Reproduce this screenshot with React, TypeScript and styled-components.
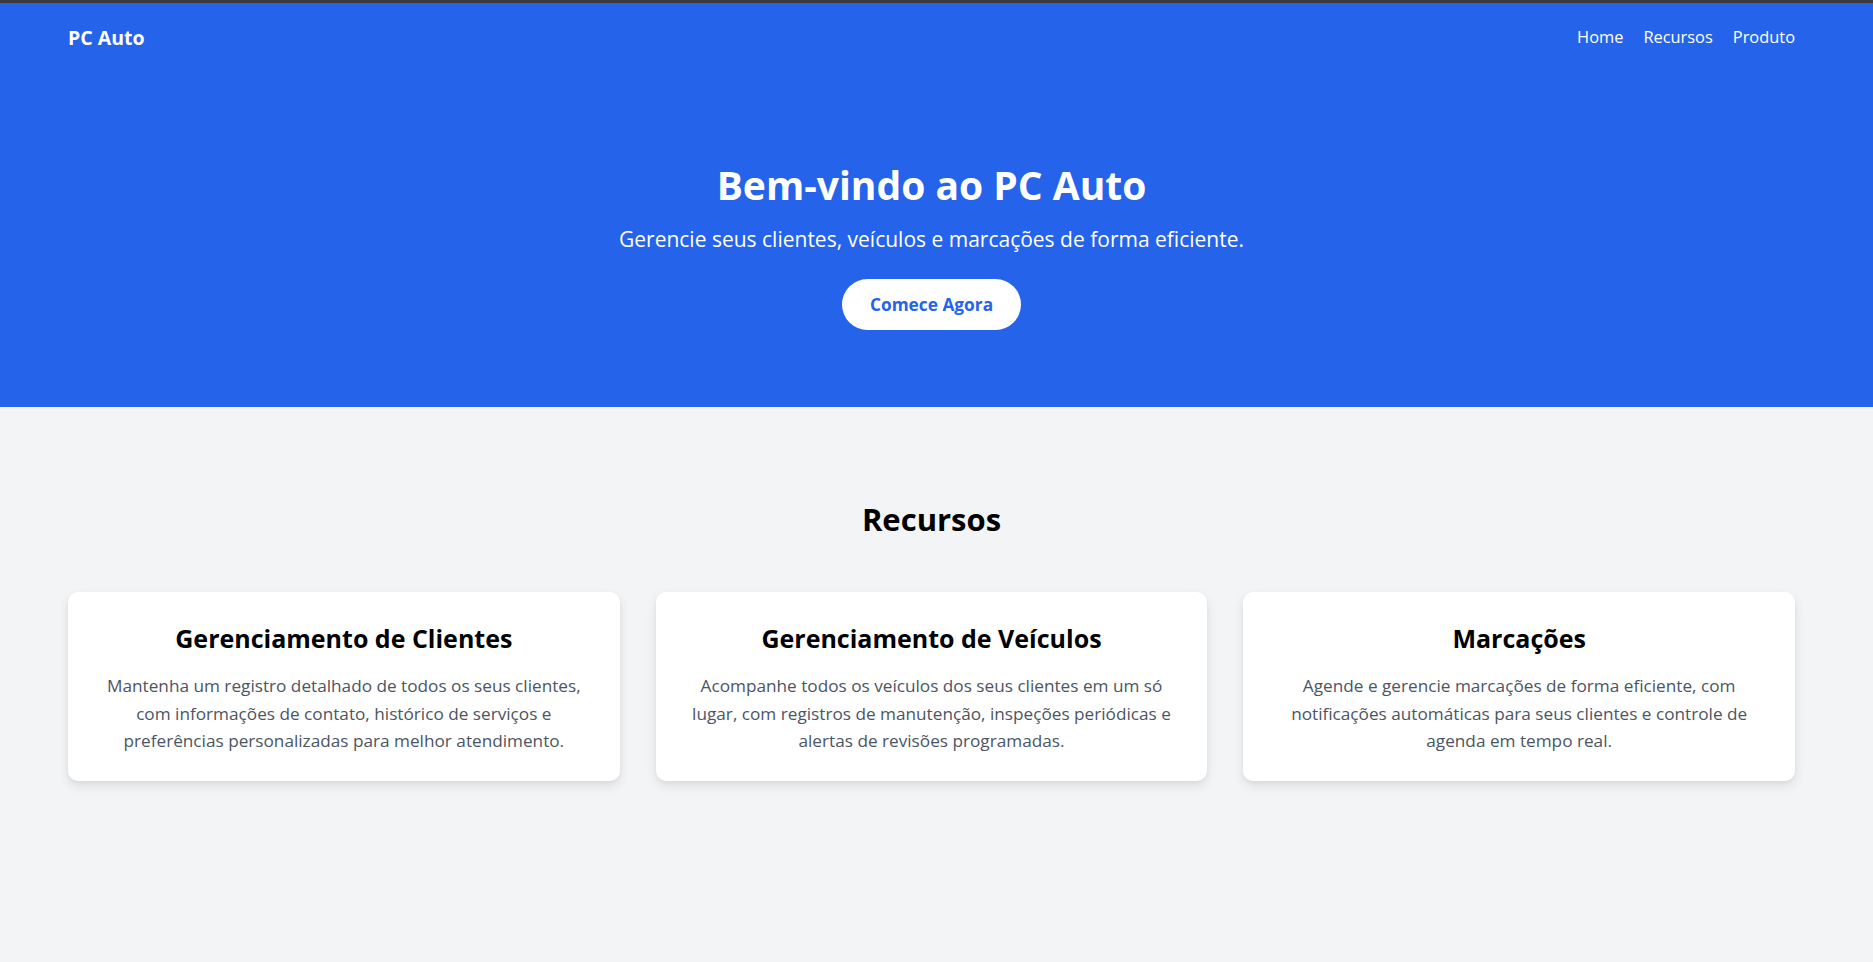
import React from "react";
import styled, { createGlobalStyle } from "styled-components";

const GlobalStyle = createGlobalStyle`
  *, *::before, *::after { box-sizing: border-box; }
  html, body { margin: 0; padding: 0; }
  body {
    background: #f3f4f6;
    font-family: "Open Sans", "Noto Sans", sans-serif;
    color: #000;
    -webkit-font-smoothing: antialiased;
  }
`;

const Page = styled.div`
  min-height: 962px;
  display: flex;
  flex-direction: column;
  border-top: 3px solid #3b3b3d;
`;

const Blue = styled.div`
  background: #2563eb;
  color: #fff;
`;

const Header = styled.header`
  display: flex;
  align-items: center;
  justify-content: space-between;
  padding: 20px 78px 20px 68px;
  height: 68px;
`;

const Logo = styled.div`
  font-size: 19.5px;
  font-weight: 700;
  line-height: 28px;
  margin-top: 2px;
`;

const Nav = styled.nav`
  display: flex;
  gap: 20px;
`;

const NavLink = styled.a`
  color: #fff;
  text-decoration: none;
  font-size: 16.4px;
  line-height: 28px;
`;

const Hero = styled.section`
  display: flex;
  flex-direction: column;
  align-items: center;
  padding: 92px 78px 77px 68px;
  text-align: center;
`;

const HeroTitle = styled.h1`
  margin: 0;
  font-size: 39px;
  font-weight: 700;
  line-height: 43px;
`;

const HeroText = styled.p`
  margin: 19px 0 0;
  font-size: 21px;
  line-height: 28px;
`;

const Cta = styled.button`
  margin-top: 26px;
  height: 51px;
  padding: 0 28px;
  border: none;
  border-radius: 999px;
  background: #fff;
  color: #2563eb;
  font-family: inherit;
  font-size: 17.3px;
  font-weight: 700;
  cursor: pointer;
`;

const Features = styled.section`
  padding: 92px 78px 80px 68px;
  display: flex;
  flex-direction: column;
  align-items: center;
`;

const SectionTitle = styled.h2`
  margin: 0;
  font-size: 31px;
  font-weight: 700;
  line-height: 40px;
`;

const Grid = styled.div`
  margin-top: 53px;
  width: 100%;
  display: grid;
  grid-template-columns: repeat(3, 1fr);
  gap: 36px;
`;

const Card = styled.article`
  background: #fff;
  border-radius: 10px;
  box-shadow: 0 5px 12px rgba(0, 0, 0, 0.09), 0 2px 4px rgba(0, 0, 0, 0.04);
  padding: 30px 29px 26px;
  text-align: center;
`;

const CardTitle = styled.h3`
  margin: 0;
  font-size: 25px;
  font-weight: 700;
  line-height: 32px;
`;

const CardText = styled.p`
  margin: 18px 0 0;
  font-size: 17.2px;
  line-height: 27.5px;
  color: #4b5563;
`;

const features = [
  {
    title: "Gerenciamento de Clientes",
    text: "Mantenha um registro detalhado de todos os seus clientes, com informações de contato, histórico de serviços e preferências personalizadas para melhor atendimento.",
  },
  {
    title: "Gerenciamento de Veículos",
    text: "Acompanhe todos os veículos dos seus clientes em um só lugar, com registros de manutenção, inspeções periódicas e alertas de revisões programadas.",
  },
  {
    title: "Marcações",
    text: "Agende e gerencie marcações de forma eficiente, com notificações automáticas para seus clientes e controle de agenda em tempo real.",
  },
];

export default function App() {
  return (
    <>
      <GlobalStyle />
      <Page>
        <Blue>
          <Header>
            <Logo>PC Auto</Logo>
            <Nav>
              <NavLink href="#">Home</NavLink>
              <NavLink href="#">Recursos</NavLink>
              <NavLink href="#">Produto</NavLink>
            </Nav>
          </Header>
          <Hero>
            <HeroTitle>Bem-vindo ao PC Auto</HeroTitle>
            <HeroText>Gerencie seus clientes, veículos e marcações de forma eficiente.</HeroText>
            <Cta>Comece Agora</Cta>
          </Hero>
        </Blue>
        <Features>
          <SectionTitle>Recursos</SectionTitle>
          <Grid>
            {features.map((f) => (
              <Card key={f.title}>
                <CardTitle>{f.title}</CardTitle>
                <CardText>{f.text}</CardText>
              </Card>
            ))}
          </Grid>
        </Features>
      </Page>
    </>
  );
}
